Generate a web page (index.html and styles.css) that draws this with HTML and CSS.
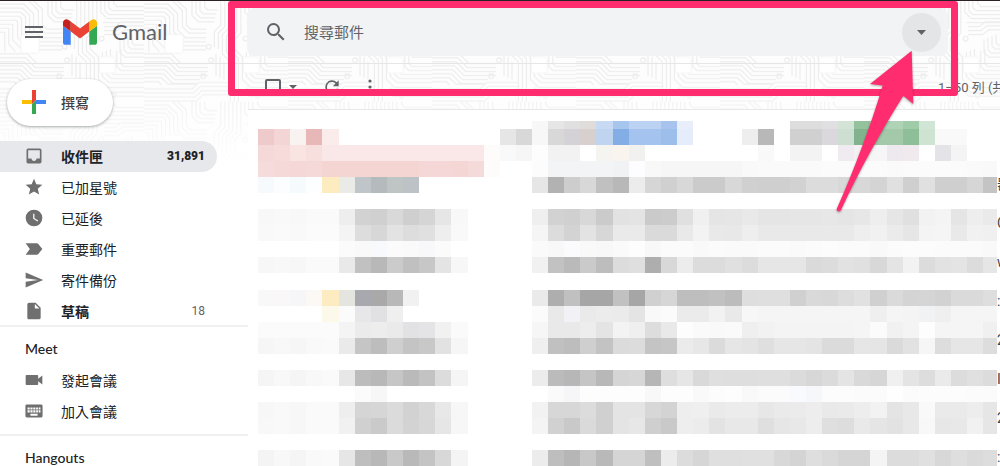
FILE: index.html
```html
<!DOCTYPE html>
<html lang="zh-Hant">
<head>
<meta charset="utf-8">
<meta name="viewport" content="width=device-width, initial-scale=1">
<title>Gmail</title>
<link rel="stylesheet" href="styles.css">
</head>
<body>
<div class="app">
  <svg class="backdrop" aria-hidden="true">
    <defs>
      <pattern id="circuit" width="180" height="126" patternUnits="userSpaceOnUse" patternTransform="scale(0.8)">
        <g fill="none" stroke="#ededed" stroke-width="1.5">
          <path d="M0 4h30l12 12v20l10 10h26M0 9h28l9 9v20l12 13h29M0 14h26l6 6v20l14 16h32M0 19h24l3 3v20l17 19h34M0 24h20l2 2v20l20 20M0 29h16v20l14 14M0 34h11v20l8 9M0 39h6v24M0 66h34l12 12h34M0 71h32l12 12h36M0 76h30l12 12h38M0 81h28l12 12h40M0 86h26l12 12h32M0 91h24l12 12h30M0 96h22l8 8h36M0 101h18l4 4M0 110h60l8-8h40M0 115h62l8-8h40M0 120h64l8-8h40M0 125h66l8-8h40"/>
          <path d="M36 0l12 12v20l8 8h22M42 0l11 10v20l5 5h20M60 0v18l8 8h20M65 0v16l6 5h18M70 0v12l4 4h16M76 0v8l4 3h12M96 0v30l-8 8v20M101 0v32l-8 8v20M106 0v34l-8 8v24l10 10v50M111 0v36l-8 8v20l10 10v52M116 0v38l-8 8v16l10 10v54M121 0v40l-8 8v12l10 10v28l10 10h47M128 64v30l8 8h44M133 62v29l6 6h41M138 60v28l4 4h38M146 62v20l5 5h29M151 60v18l4 4h25M90 66v28M95 70v26M100 76v22M128 108l6 6h46M124 112l7 7h49"/>
          <path d="M126 0v14l8 8h46M131 0v12l5 5h44M136 0v8l4 4h40M142 0v3l4 4h34M128 27h52M130 32h14l8-6h28M130 37h16l8-6h26M130 42h18l8-6h24M150 48v16l6 6h24M155 46v15l4 4h21M160 44v12l4 4h16M165 42v10l3 3h12"/>
          <circle cx="81" cy="57" r="3"/><circle cx="84" cy="74" r="3"/><circle cx="127" cy="47" r="3"/><circle cx="74" cy="94" r="3"/><circle cx="142" cy="118" r="3"/>
        </g>
        <g fill="#fff" stroke="#f3f3f3"><rect x="26" y="42" width="23" height="23" rx="3"/><rect x="124" y="70" width="20" height="20" rx="3"/></g>
      </pattern>
      <linearGradient id="fade" x1="0" y1="0" x2="0" y2="1">
        <stop offset="0.4" stop-color="#fff" stop-opacity="0"/><stop offset="0.9" stop-color="#fff"/>
      </linearGradient>
    </defs>
    <rect width="100%" height="100%" fill="#fdfdfd"/>
    <rect width="100%" height="100%" fill="url(#circuit)"/>
    <rect width="100%" height="100%" fill="url(#fade)"/>
  </svg>

  <header class="topbar">
    <div class="brand">
      <button class="icon-btn menu" aria-label="主選單"><svg width="18" height="14" viewBox="0 0 18 14" stroke="#5f6368" stroke-width="2"><path d="M0 2h18M0 7h18M0 12h18"/></svg></button>
      <a class="logo" href="#">
        <svg width="34" height="26" viewBox="52 42 88 66" aria-hidden="true"><path fill="#4285f4" d="M58 108h14V74L52 59v43c0 3.32 2.69 6 6 6"/><path fill="#34a853" d="M120 108h14c3.32 0 6-2.69 6-6V59l-20 15"/><path fill="#fbbc04" d="M120 48v26l20-15v-8c0-7.42-8.47-11.65-14.4-7.2"/><path fill="#ea4335" d="M72 74V48l24 18 24-18v26L96 92"/><path fill="#c5221f" d="M52 51v8l20 15V48l-5.6-4.2c-5.94-4.45-14.4-.22-14.4 7.2"/></svg>
        <span>Gmail</span>
      </a>
    </div>
    <form class="search" role="search">
      <button class="icon-btn" type="button" aria-label="搜尋"><svg width="24" height="24" viewBox="0 0 24 24" fill="#5f6368"><path d="M15.5 14h-.79l-.28-.27A6.47 6.47 0 0 0 16 9.5 6.5 6.5 0 1 0 9.5 16c1.61 0 3.09-.59 4.23-1.57l.27.28v.79l5 4.99L20.49 19l-4.99-5zm-6 0C7.01 14 5 11.99 5 9.5S7.01 5 9.5 5 14 7.01 14 9.5 11.99 14 9.5 14z"/></svg></button>
      <input type="text" placeholder="搜尋郵件" aria-label="搜尋郵件">
      <button class="options" type="button" aria-label="顯示搜尋選項"><svg width="9" height="5" viewBox="0 0 9 5" fill="#5f6368"><path d="M0 0h9L4.5 5z"/></svg></button>
    </form>
  </header>

  <div class="body">
    <aside class="sidebar">
      <button class="compose"><svg width="24" height="24" viewBox="0 0 24 24" aria-hidden="true"><path fill="#ea4335" d="M10 0h4v10l-4 4z"/><path fill="#fbbc04" d="M0 10h10v4H0z"/><path fill="#34a853" d="M10 14l4-4v14h-4z"/><path fill="#4285f4" d="M14 10h10v4H14z"/></svg><span>撰寫</span></button>
      <nav class="folders">
        <a class="item active" href="#"><svg viewBox="0 0 24 24"><path d="M19 3H5a2 2 0 0 0-2 2v14c0 1.1.9 2 2 2h14a2 2 0 0 0 2-2V5a2 2 0 0 0-2-2zm0 12h-4c0 1.66-1.35 3-3 3s-3-1.34-3-3H5V5h14v10z"/></svg><span>收件匣</span><b class="count">31,891</b></a>
        <a class="item" href="#"><svg viewBox="0 0 24 24"><path d="M12 17.27 18.18 21l-1.64-7.03L22 9.24l-7.19-.61L12 2 9.19 8.63 2 9.24l5.46 4.73L5.82 21z"/></svg><span>已加星號</span></a>
        <a class="item" href="#"><svg viewBox="0 0 24 24"><path d="M12 2a10 10 0 1 0 0 20 10 10 0 0 0 0-20zm4.2 14.2L11 13V7h1.5v5.2l4.5 2.7z"/></svg><span>已延後</span></a>
        <a class="item" href="#"><svg viewBox="0 0 24 24"><path d="M2 5h13.5c.7 0 1.3.3 1.7.9L22 12l-4.8 6.1c-.4.6-1 .9-1.7.9H2l5-7z"/></svg><span>重要郵件</span></a>
        <a class="item" href="#"><svg viewBox="0 0 24 24"><path d="M2 21l21-9L2 3v7l15 2-15 2z"/></svg><span>寄件備份</span></a>
        <a class="item bold" href="#"><svg viewBox="0 0 24 24"><path d="M6 2a2 2 0 0 0-2 2v16c0 1.1.9 2 2 2h12a2 2 0 0 0 2-2V8l-6-6H6zm7 7V3.5L18.5 9H13z"/></svg><span>草稿</span><span class="count">18</span></a>
      </nav>
      <section class="group">
        <h2>Meet</h2>
        <a class="item" href="#"><svg viewBox="0 0 24 24"><path d="M17 10.500V7c0-.55-.45-1-1-1H3c-.55 0-1 .45-1 1v10c0 .55.45 1 1 1h13c.55 0 1-.45 1-1v-3.500l5 4v-11z"/></svg><span>發起會議</span></a>
        <a class="item" href="#"><svg viewBox="-2 -2 28 28"><path fill-rule="evenodd" d="M2 3h20a2 2 0 0 1 2 2v14a2 2 0 0 1-2 2H2a2 2 0 0 1-2-2V5c0-1.100.9-2 2-2zm1 4v3h3V7zm4 0v3h3V7zm4 0v3h3V7zm4 0v3h2.500V7zm3.500 0v3H21V7zM3 11v3h3v-3zm4 0v3h3v-3zm4 0v3h3v-3zm4 0v3h2.500v-3zm3.500 0v3H21v-3zM7 16v2.500h10V16z"/></svg><span>加入會議</span></a>
      </section>
      <section class="group"><h2>Hangouts</h2></section>
    </aside>

    <main class="main">
      <div class="toolbar">
        <input class="select-all" type="checkbox" aria-label="選取">
        <button class="icon-btn caret" aria-label="選取選項"><svg width="8" height="4" viewBox="0 0 8 4" fill="#5f6368"><path d="M0 0h8L4 4z"/></svg></button>
        <button class="icon-btn refresh" aria-label="重新整理"><svg width="20" height="20" viewBox="0 0 24 24" fill="#5f6368"><path d="M17.650 6.350A8 8 0 1 0 19.730 14h-2.080A6 6 0 1 1 12 6c1.660 0 3.140.69 4.220 1.780L13 11h7V4z"/></svg></button>
        <button class="icon-btn more" aria-label="更多"><svg width="4" height="16" viewBox="0 0 4 16" fill="#5f6368"><circle cx="2" cy="2" r="1.600"/><circle cx="2" cy="8" r="1.600"/><circle cx="2" cy="14" r="1.600"/></svg></button>
        <span class="range">1–50 列 (共</span>
      </div>
      <div class="mail">
        <svg class="mosaic" viewBox="0 0 45.85 345" preserveAspectRatio="none" shape-rendering="crispEdges" aria-hidden="true"></svg>
        <ul class="subjects"><li>器</li><li>C</li><li>w</li><li>:</li><li>2</li><li>I</li><li>2</li><li>:</li></ul>
      </div>
    </main>
  </div>

  <div class="highlight"></div>
  <svg class="pointer" width="84" height="168" viewBox="832 48 84 168" aria-hidden="true"><path fill="#ff2d6f" d="M911.700 50.700 913.300 104 903.300 95.700C880 133 859 171 841 210c-1 2.500-5 1.500-4.300-1C854 170 870 128 882.700 85.500L870 84z"/></svg>
</div>
<script src="mosaic.js"></script>
</body>
</html>
```

FILE: styles.css
```css
* { box-sizing: border-box; }

body {
  margin: 0;
  background: #fff;
  color: #202124;
  font-family: Roboto, "Noto Sans CJK TC", sans-serif;
  font-size: 14px;
}

button, input { font: inherit; color: inherit; }
button { border: 0; padding: 0; background: none; }
a { color: inherit; text-decoration: none; }
svg { display: block; flex: none; }

.app {
  position: relative;
  height: 100vh;
  overflow: hidden;
  display: flex;
  flex-direction: column;
  border-top: 1px solid #2a2226;
}

.backdrop {
  position: absolute;
  top: 0;
  left: 0;
  width: 100%;
  height: 184px;
}

.topbar, .body { position: relative; display: flex; }
.topbar { height: 63px; border-bottom: 1px solid #e6e6e6; }
.body { flex: 1; min-height: 0; }

.icon-btn { display: flex; align-items: center; justify-content: center; }

.brand {
  width: 247px;
  flex: none;
  display: flex;
  align-items: center;
  gap: 20px;
  padding-left: 25px;
}

.logo { display: flex; align-items: center; gap: 15px; }

.logo span {
  padding-bottom: 2px;
  font-family: Lato, sans-serif;
  font-size: 22px;
  color: #5f6368;
}

.search {
  flex: 1;
  height: 48px;
  margin: 7px 52px 0 0;
  padding: 0 7px 0 17px;
  display: flex;
  align-items: center;
  gap: 16px;
  border-radius: 8px;
  background: #f1f3f4;
}

.search input {
  flex: 1;
  min-width: 0;
  padding: 2px 0 0;
  border: 0;
  background: none;
  font-size: 15px;
}

.search input::placeholder { color: #5f6368; opacity: 1; }

.options {
  width: 39px;
  height: 39px;
  display: flex;
  align-items: center;
  justify-content: center;
  border-radius: 50%;
  background: #e3e5e6;
}

.sidebar { width: 248px; flex: none; padding-top: 15px; }

.compose {
  display: flex;
  align-items: center;
  gap: 15px;
  height: 47px;
  margin-left: 7px;
  padding: 0 24px 2px 15px;
  border-radius: 24px;
  background: #fff;
  box-shadow: 0 1px 3px rgba(60, 64, 67, 0.45);
  font-weight: 500;
  color: #3c4043;
}

.folders { padding-top: 15px; }

.item {
  display: flex;
  align-items: center;
  gap: 17px;
  height: 31px;
  margin-right: 31px;
  padding: 0 12px 2px 24px;
  border-radius: 0 16px 16px 0;
}

.item svg { width: 20px; height: 20px; fill: #6f6f6f; }
.item.active { background: #e7e8ec; font-weight: 700; }
.item.bold { font-weight: 700; }
.count { margin-left: auto; font-size: 12px; }
.bold .count { font-weight: 400; color: #5f6368; }

.group {
  padding: 7px 0;
  border-top: 2px solid #f0f0f0;
}

.folders + .group { position: relative; margin-top: -2px; }

.group h2 {
  margin: 0;
  padding: 0 0 2px 25px;
  font-family: Lato, sans-serif;
  font-size: 14px;
  font-weight: 500;
  line-height: 29px;
}

.main { flex: 1; min-width: 0; }

.toolbar {
  display: flex;
  align-items: center;
  height: 46px;
  padding-left: 17px;
  border-bottom: 1px solid #e8e8e8;
  overflow: hidden;
  color: #5f6368;
}

.select-all {
  appearance: none;
  width: 16px;
  height: 16px;
  margin: 0;
  border: 2px solid #5f6368;
  border-radius: 2px;
}

.caret { margin-left: 8px; }
.refresh { margin-left: 25px; }
.more { margin-left: 26px; }

.range {
  width: 62px;
  margin-left: auto;
  white-space: nowrap;
  font-size: 13px;
}

.mail {
  display: flex;
  align-items: flex-start;
  padding: 11px 0 0 10px;
  background: #fff;
}

.mosaic { flex: 1; min-width: 0; height: 345px; }

.subjects {
  width: 3px;
  margin: 0;
  padding: 48px 0 0;
  overflow: hidden;
  list-style: none;
  color: #444;
}

.subjects li { height: 39px; line-height: 30px; }

.highlight {
  position: absolute;
  top: 0;
  left: 228px;
  right: 42px;
  height: 95px;
  border: 7px solid #ff2d6f;
  border-radius: 3px;
}

.pointer {
  position: absolute;
  top: 47px;
  right: 84px;
  filter: drop-shadow(0 1px 1px rgba(0, 0, 0, 0.35));
}
```

FILE: mosaic.js
```js
// Blurred message rows: [row, first column, cell colours]; two digits are a grey level.
const rows = [
  [0, 17, "f7 e6 e0 dfdcda c8daf3 a6c6ee bcd2f2 bcd2f2 a8c4ee e8effb"],
  [0, 33, "dd dd e0dfe2 d3e3d6 93c29d b0d3b7 b0d3b7 a0cba9 d0e5d5"],
  [1, 0, "efcaca f2d5d4 f8f2f0 e8b8b8 fbecec"],
  [1, 15, "e6 d8 f7 d8 d4d2d6 d8d0ce c0d4ef 82aee5 a4c3ee a4c3ee 9dbdeb e5edfa"],
  [1, 30, "ee b8 ff d0 d0 dad8dc cddfd0 83b38d a4c8aa a4c8aa 8fbf99 cfe3d3 f9 f9"],
  [2, 0, "f5d9d9 f6dbda f9e4e2 f7dfde f9e8e7 f9e8e7 f9e8e7 f9e8e7 f9e8e7 f9e8e7 f9e8e7 f9e8e7 f9e8e7 f9e8e7 fefbfb f9 f6 fd f2 f2 ff f5f4f1 f9f4ee f1f1ef"],
  [2, 31, "f9 ff f3 f3 ff efebf0 f4f0f4 f6 eee8ef f0e9ee ff e4e4e8 f4"],
  [3, 0, "f5dbdb f5d9d9 f5d7d7 f5d9d8 f4d5d2 f4d5d2 f4d5d2 f4d5d2 f4d5d2 f4d5d2 f5d7d8 f5d7d8 f4d6d4 f5dada fefbfb"],
  [3, 17, "fc f3f4f6 f3f4f6 f3f4f6 f3f4f6 f1f2f4 fdfdff f8 f6 f6 f6 f6 f6 f9 fa fa fa fa fb fb fb fb fa fb fb fb fb fa f9"],
  [4, 0, "f7fafc fbfdff f5fafc fcfeff fdecc0 eaebe7 c0c5c9 b5babd bfc4c5 bcc2c6"],
  [4, 17, "e6 b2 cd d8 c0 b8 ec d6 d0 d8 cb cb d8 d0 cf cf d2 dc dc d8 d8 d4 e0 cf e0 cf cf d6 c4"],
  [6, 0, "f8 f9 f8 fa fa ee d2 d0 d9 cf d5 e6 f8"],
  [6, 17, "ef d2 d0 d8 cb e2 e4 ca cc e0 f0 e5 e6 e9 e5 e5 e6 e6 e7 e5 e7 ee e6 e0 f2 f4 e5 ee ea"],
  [7, 0, "f9 fa f9 fb fb f4 dd d7 e3 dd e0 ee f9"],
  [7, 17, "f5 dc d3 e3 d7 ea ea da da e9 f3 e9 e8 ee e9 e9 e9 e9 e9 e9 ee f1 eb e6 f4 f5 e9 f1 f0"],
  [8, 5, "fb f9 f8f9fd fb fa f8f8fa fb"],
  [8, 17, "fa f8 fbfbfd f9 f8 fa fd f8 fb fb f9 fb fa fa fb fb fa fb fc fb fb f9 fb fc fc fb fb fb f9"],
  [9, 0, "f7 f8 f7 fa fa e9 c1 b8 cb c0 c7 e4 f7"],
  [9, 17, "f1 c2 ba ca bd dc df ae d8 ec dc dc e0 dc e6 e6 e6 da dc e2 e0 d8 e4 f2 dc e2 e4 dc e6"],
  [11, 0, "f8 f9f7f7 f6f6f8 fbf8f6 fdebc2 e5e5df a8a9ae a9 b8 f1"],
  [11, 17, "ea ae c0 a6 a6 c1 a6 d0 d6 be be c1 bc de df df d0 d9 d8 dd e1 d0 da d4 d5 d2 da da de"],
  [12, 4, "fcf8ea fb e7e7e9 e1e1e4 ef"],
  [12, 17, "fb e9 f2f2f6 ea ec eb e4 f9 fb eb eb f2 e9 f7 f5 f5 f5 f5 f5 f5 f5 ef f5 f4 f1f2f4 ef f5 f5 f5"],
  [13, 0, "fb fb fb fb fb f4 eb ed ea e2e2e4 e4e4e6 f1 fa"],
  [13, 17, "f6 e9 e9 ed e4 f3 ef dd e9 fd fa f9 fa ef f2 f4 f4 f4 f4 f4 f5 fb f1 f4 fd f5 f5 f5 f0"],
  [14, 0, "f6 f8 f6 f9 fa ea c5 bd cf c4 c8 e2 f6"],
  [14, 17, "ef c0 bd cf c3 db dc c4 c6 eb e7 db e6 e4 df e6 e6 e4 db db e6 e5 da e2 f6 dd e6 e6 dd"],
  [16, 0, "f5 f8 f5 f8 fa e7 bc b8 c6 ba c3 dc f5"],
  [16, 17, "ec bb b7 c5 b8 d5 d7 b6 de e6 d9 df de de df df db d7 db e4 d9 d6 f0 e4 dd ea dc e0 dc"],
  [17, 6, "fb f7"],
  [17, 18, "fa f6f6f8 fd fd fd fd f8 fd fd f9 fc fd f9 fb fb f9fafe f6f7fb fc fc fb fb fe fb fc fc fc fb fb"],
  [18, 0, "f7 f9 f7 fa fa ee d5 d6 db d2 d8 e8 f7"],
  [18, 17, "f2 d7 d7 dc d0 e4 e4 d7 d3 ee ef ea ec ec e7 ea eb ed e9 ea ed f2 e4 e8 f9 ea ea ed e6"],
  [19, 0, "f8 f9 f7 fa fa f1 d0 ca db d3 d7 e6 f7"],
  [19, 17, "f4 d1 c9 da d0 e4 e7 cf c9 ee ec e3 e8 e8 df e6 e8 ed df dd e9 e5 e2 e8 f8 e7 e8 f1 e6"],
  [21, 0, "f4 f8 f5 f9 fa e6 be b8 c9 b9 c4 d8 f4"],
  [21, 17, "ec be b6 c8 b9 d5 d5 bf ec dc d6 df df e0 e0 d8 d4 de da d5 d5 f4 dc dc e0 d8 de da dd"],
];
const mosaic = document.querySelector(".mosaic");
const edge = (row) => (row === 0 ? 0 : Math.round(8 + (row - 1) * 16.05));
for (const [row, first, cells] of rows) {
  cells.split(" ").forEach((cell, i) => {
    const rect = document.createElementNS("http://www.w3.org/2000/svg", "rect");
    rect.setAttribute("x", first + i);
    rect.setAttribute("y", edge(row));
    rect.setAttribute("width", 1);
    rect.setAttribute("height", edge(row + 1) - edge(row));
    rect.setAttribute("fill", "#" + (cell.length === 2 ? cell.repeat(3) : cell));
    mosaic.append(rect);
  });
}
```
